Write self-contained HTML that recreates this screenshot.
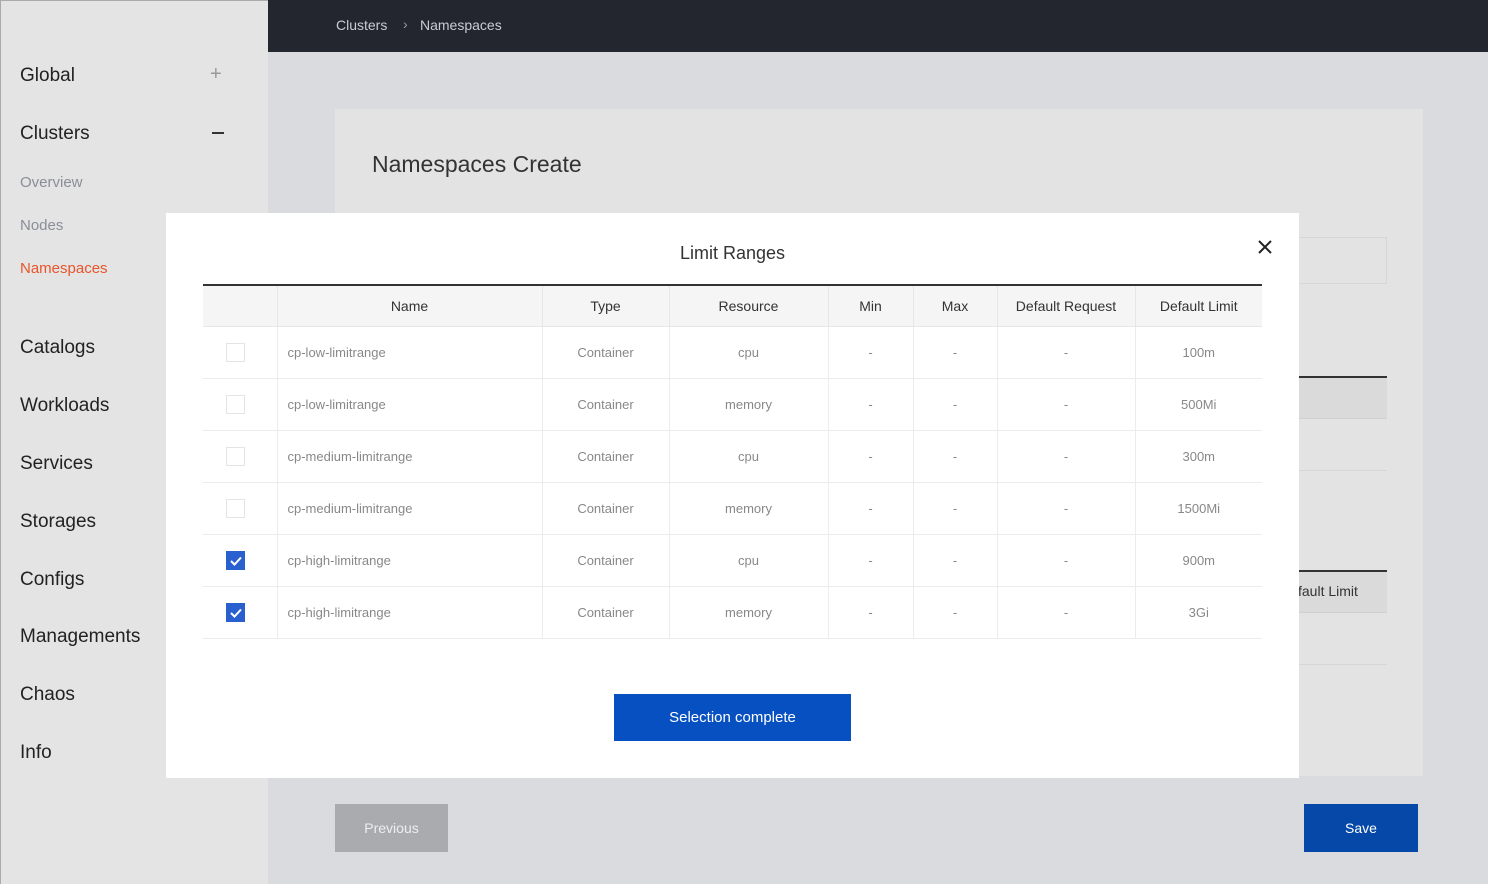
<!DOCTYPE html>
<html><head><meta charset="utf-8"><style>
*{margin:0;padding:0;box-sizing:border-box}
body{width:1488px;height:884px;overflow:hidden;position:relative;background:#dadbde;font-family:"Liberation Sans","Noto Sans CJK KR",sans-serif}
.abs{position:absolute}
#side{left:0;top:0;width:268px;height:884px;background:#e4e4e4;border-left:1px solid #aaa;border-top:1px solid #aaa}
.m{position:absolute;left:19px;font-size:19px;color:#222}
.s{position:absolute;left:19px;font-size:15px;color:#8a8e96}
#hdr{left:268px;top:0;width:1220px;height:52px;background:#23262e;color:#c9ccd2;font-size:14px}
#card{left:335px;top:109px;width:1088px;height:667px;background:#e3e3e3}
#modal{left:166px;top:213px;width:1133px;height:565px;background:#fff}
table{position:absolute;left:37px;top:71px;border-collapse:collapse;width:1059px;font-size:13px}
th{height:41px;background:#f5f5f5;font-weight:normal;color:#333;font-size:14px;border-top:2px solid #333;border-bottom:1px solid #e6e6e6;border-left:1px solid #e6e6e6}
td{height:52px;text-align:center;color:#888;border-bottom:1px solid #ececec;border-left:1px solid #ececec}
th:first-child,td:first-child{border-left:none}
td:first-child{padding-right:8px}
td.n{text-align:left;padding-left:10px}
.cb{display:inline-block;width:19px;height:19px;border:1px solid #e4e4e4;vertical-align:middle}
.ck{background:#2a5fcf;border-color:#2a5fcf;position:relative}
.btn{position:absolute;color:#fff;font-size:14px;display:flex;align-items:center;justify-content:center}
</style></head><body>
<div id="side" class="abs">
<div class="m" style="top:64px">Global</div><div class="abs" style="left:209px;top:62px;font-size:20px;color:#999">+</div>
<div class="m" style="top:122px">Clusters</div><div class="abs" style="left:211px;top:131px;width:12px;height:2px;background:#333"></div>
<div class="s" style="top:173px">Overview</div>
<div class="s" style="top:216px">Nodes</div>
<div class="s" style="top:259px;color:#e8552a">Namespaces</div>
<div class="m" style="top:336px">Catalogs</div>
<div class="m" style="top:394px">Workloads</div>
<div class="m" style="top:452px">Services</div>
<div class="m" style="top:510px">Storages</div>
<div class="m" style="top:568px">Configs</div>
<div class="m" style="top:625px">Managements</div>
<div class="m" style="top:683px">Chaos</div>
<div class="m" style="top:741px">Info</div>
</div>
<div id="hdr" class="abs"><span class="abs" style="left:68px;top:17px">Clusters</span><span class="abs" style="left:135px;top:16px;color:#999">›</span><span class="abs" style="left:152px;top:17px">Namespaces</span></div>
<div id="card" class="abs">
<div class="abs" style="left:37px;top:42px;font-size:23px;color:#333">Namespaces Create</div>
<div class="abs" style="left:940px;top:128px;width:112px;height:47px;border:1px solid #d6d6d6"></div>
<div class="abs" style="left:940px;top:267px;width:112px;height:2px;background:#333"></div>
<div class="abs" style="left:940px;top:269px;width:112px;height:41px;background:#dadada;border-bottom:1px solid #d0d0d0"></div>
<div class="abs" style="left:940px;top:361px;width:112px;height:1px;background:#d6d6d6"></div>
<div class="abs" style="left:940px;top:461px;width:112px;height:2px;background:#333"></div>
<div class="abs" style="left:940px;top:463px;width:112px;height:41px;background:#dadada;border-bottom:1px solid #d0d0d0"></div>
<div class="abs" style="left:963px;top:474px;font-size:14px;color:#333">fault Limit</div>
<div class="abs" style="left:940px;top:555px;width:112px;height:1px;background:#d6d6d6"></div>
</div>
<div id="modal" class="abs">
<div class="abs" style="left:0;width:1133px;top:30px;text-align:center;font-size:18px;color:#333">Limit Ranges</div>
<svg class="abs" style="left:1091px;top:26px" width="16" height="16"><path d="M2 2L14 14M14 2L2 14" stroke="#222" stroke-width="2"/></svg>
<table>
<tr><th style="width:74px"></th><th style="width:265px">Name</th><th style="width:127px">Type</th><th style="width:159px">Resource</th><th style="width:85px">Min</th><th style="width:84px">Max</th><th style="width:138px">Default Request</th><th>Default Limit</th></tr>
<tr><td><span class="cb"></span></td><td class="n">cp-low-limitrange</td><td>Container</td><td>cpu</td><td>-</td><td>-</td><td>-</td><td>100m</td></tr>
<tr><td><span class="cb"></span></td><td class="n">cp-low-limitrange</td><td>Container</td><td>memory</td><td>-</td><td>-</td><td>-</td><td>500Mi</td></tr>
<tr><td><span class="cb"></span></td><td class="n">cp-medium-limitrange</td><td>Container</td><td>cpu</td><td>-</td><td>-</td><td>-</td><td>300m</td></tr>
<tr><td><span class="cb"></span></td><td class="n">cp-medium-limitrange</td><td>Container</td><td>memory</td><td>-</td><td>-</td><td>-</td><td>1500Mi</td></tr>
<tr><td><span class="cb ck"><svg class="abs" style="left:3px;top:4px" width="12" height="10"><path d="M1 5L4.5 8.5L11 1.5" stroke="#fff" stroke-width="2" fill="none"/></svg></span></td><td class="n">cp-high-limitrange</td><td>Container</td><td>cpu</td><td>-</td><td>-</td><td>-</td><td>900m</td></tr>
<tr><td><span class="cb ck"><svg class="abs" style="left:3px;top:4px" width="12" height="10"><path d="M1 5L4.5 8.5L11 1.5" stroke="#fff" stroke-width="2" fill="none"/></svg></span></td><td class="n">cp-high-limitrange</td><td>Container</td><td>memory</td><td>-</td><td>-</td><td>-</td><td>3Gi</td></tr>
</table>
<div class="btn" style="left:448px;top:481px;width:237px;height:47px;background:#0650c1;font-size:15px">Selection complete</div>
</div>
<div class="btn" style="left:335px;top:804px;width:113px;height:48px;background:#aaabae;color:#eee">Previous</div>
<div class="btn" style="left:1304px;top:804px;width:114px;height:48px;background:#0648a8">Save</div>
</body></html>
